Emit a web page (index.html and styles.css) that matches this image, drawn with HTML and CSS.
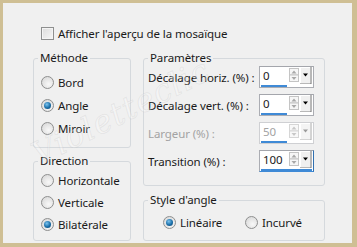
FILE: index.html
```html
<!doctype html>
<html>
	<head>
		<meta charset="utf-8"/>
		<link rel="stylesheet" href="styles.css">
	</head>
	<body>
		<div class="frame">
			<div class="check-row"><span class="checkbox"></span>Afficher l'aperçu de la mosaïque</div>

			<div class="cols">
				<div class="col col-left">
					<fieldset class="group methode">
						<legend>Méthode</legend>
						<div class="radio-row"><span class="radio"></span>Bord</div>
						<div class="radio-row"><span class="radio checked"></span>Angle</div>
						<div class="radio-row"><span class="radio"></span>Miroir</div>
					</fieldset>
					<fieldset class="group direction">
						<legend>Direction</legend>
						<div class="radio-row"><span class="radio"></span>Horizontale</div>
						<div class="radio-row"><span class="radio"></span>Verticale</div>
						<div class="radio-row"><span class="radio checked"></span>Bilatérale</div>
					</fieldset>
				</div>

				<div class="col col-right">
					<fieldset class="group params">
						<legend>Paramètres</legend>
						<div class="field">
							<span class="field-label">Décalage horiz. (%) :</span>
							<div class="spin">
								<div class="spin-top"><span class="spin-val">0</span>
									<svg class="spin-btns" width="24" height="17" viewBox="0 0 24 17"><rect x="1.5" y="1.5" width="9" height="6.5" fill="#f6f6f6" stroke="#c4c4c4"/><rect x="1.5" y="8" width="9" height="6.5" fill="#f6f6f6" stroke="#c4c4c4"/><path d="M3.5 6.5 L6 3.5 L8.5 6.5 Z M3.5 10 L6 13 L8.5 10 Z" fill="#a8a8a8"/><rect x="12.5" y="0.5" width="10" height="16" fill="#f0f0f0" stroke="#ffffff"/><path d="M23 0 V17 H12" fill="none" stroke="#707070"/><path d="M15 6.5 H20 L17.5 9.5 Z" fill="#000"/></svg>
								</div>
								<div class="spin-bar"></div>
							</div>
						</div>
						<div class="field">
							<span class="field-label">Décalage vert. (%) :</span>
							<div class="spin">
								<div class="spin-top"><span class="spin-val">0</span>
									<svg class="spin-btns" width="24" height="17" viewBox="0 0 24 17"><rect x="1.5" y="1.5" width="9" height="6.5" fill="#f6f6f6" stroke="#c4c4c4"/><rect x="1.5" y="8" width="9" height="6.5" fill="#f6f6f6" stroke="#c4c4c4"/><path d="M3.5 6.5 L6 3.5 L8.5 6.5 Z M3.5 10 L6 13 L8.5 10 Z" fill="#a8a8a8"/><rect x="12.5" y="0.5" width="10" height="16" fill="#f0f0f0" stroke="#ffffff"/><path d="M23 0 V17 H12" fill="none" stroke="#707070"/><path d="M15 6.5 H20 L17.5 9.5 Z" fill="#000"/></svg>
								</div>
								<div class="spin-bar"></div>
							</div>
						</div>
						<div class="field disabled">
							<span class="field-label">Largeur (%) :</span>
							<div class="spin">
								<div class="spin-top"><span class="spin-val">50</span>
									<svg class="spin-btns" width="24" height="17" viewBox="0 0 24 17"><rect x="1.5" y="1.5" width="9" height="6.5" fill="#f8f8f8" stroke="#d6d6d6"/><rect x="1.5" y="8" width="9" height="6.5" fill="#f8f8f8" stroke="#d6d6d6"/><path d="M3.5 6.5 L6 3.5 L8.5 6.5 Z M3.5 10 L6 13 L8.5 10 Z" fill="#c8c8c8"/><rect x="12.5" y="0.5" width="10" height="16" fill="#f4f4f4" stroke="#ffffff"/><path d="M23 0 V17 H12" fill="none" stroke="#a8a8a8"/><path d="M15 6.5 H20 L17.5 9.5 Z" fill="#9a9a9a"/></svg>
								</div>
								<div class="spin-bar"></div>
							</div>
						</div>
						<div class="field">
							<span class="field-label">Transition (%) :</span>
							<div class="spin active">
								<div class="spin-top"><span class="spin-val">100</span>
									<svg class="spin-btns" width="24" height="17" viewBox="0 0 24 17"><rect x="1.5" y="1.5" width="9" height="6.5" fill="#f6f6f6" stroke="#c4c4c4"/><rect x="1.5" y="8" width="9" height="6.5" fill="#f6f6f6" stroke="#c4c4c4"/><path d="M3.5 6.5 L6 3.5 L8.5 6.5 Z M3.5 10 L6 13 L8.5 10 Z" fill="#a8a8a8"/><rect x="12.5" y="0.5" width="10" height="16" fill="#f0f0f0" stroke="#ffffff"/><path d="M23 0 V17 H12" fill="none" stroke="#707070"/><path d="M15 6.5 H20 L17.5 9.5 Z" fill="#000"/></svg>
								</div>
								<div class="spin-bar"></div>
							</div>
						</div>
					</fieldset>
					<fieldset class="group style">
						<legend>Style d'angle</legend>
						<div class="inline-radios">
							<div class="radio-row opt"><span class="radio checked"></span>Linéaire</div>
							<div class="radio-row"><span class="radio"></span>Incurvé</div>
						</div>
					</fieldset>
				</div>
			</div>

			<span class="watermark">Violetteclic</span>
		</div>
	</body>
</html>
```
FILE: styles.css
```css
html, body {
	margin: 0;
	padding: 0;
}

body {
	background: #cfbf94;
	font-family: "Noto Sans", "Open Sans", sans-serif;
	font-size: 11.5px;
	letter-spacing: -0.1px;
	color: #1a1a1a;
}

.frame {
	position: relative;
	box-sizing: border-box;
	width: 357px;
	height: 247px;
	border-style: solid;
	border-color: #cfbf94;
	border-width: 3px 5px 4px 3px;
	background: #f0f0f0;
	padding: 24px 0 0 30px;
	overflow: hidden;
}

.check-row {
	display: flex;
	align-items: center;
	gap: 4px;
	height: 13px;
	margin-left: 8px;
}

.checkbox {
	box-sizing: border-box;
	width: 13px;
	height: 13px;
	border: 1px solid #8e8f8f;
	background: linear-gradient(135deg, #dcdcdc, #f6f6f6);
	box-shadow: inset 0 0 0 1px #f4f4f4;
}

.cols {
	display: flex;
	gap: 12px;
	margin-top: 10px;
}

.col {
	display: flex;
	flex-direction: column;
}

.col-left {
	width: 98px;
	gap: 5px;
}

.col-right {
	width: 182px;
	gap: 6px;
}

.group {
	box-sizing: border-box;
	margin: 0;
	padding: 0;
	min-width: 0;
	border: 1px solid #d5d9dd;
	border-radius: 3px;
}

.group legend {
	margin-left: 4px;
	padding: 0 2px;
	line-height: 16px;
}

.methode {
	height: 98px;
	padding-top: 5px;
}

.direction {
	height: 88px;
}

.params {
	height: 136px;
}

.style {
	height: 49px;
	padding-top: 6px;
}

.radio-row {
	display: flex;
	align-items: center;
	gap: 4px;
	height: 23px;
	margin-left: 7px;
}

.direction .radio-row {
	height: 22px;
}

.radio {
	position: relative;
	box-sizing: border-box;
	width: 13px;
	height: 13px;
	border-radius: 50%;
	border: 1px solid #8e8f8f;
	background: radial-gradient(circle at 60% 65%, #f8f8f8, #d4d4d4);
}

.radio.checked::after {
	content: "";
	position: absolute;
	left: 2px;
	top: 2px;
	width: 7px;
	height: 7px;
	border-radius: 50%;
	background: radial-gradient(circle at 40% 35%, #7cc4ef, #1a6ea8 55%, #0c3f68);
}

.field {
	display: flex;
	align-items: center;
	height: 22px;
	margin: 0 0 6px 4px;
}

.field-label {
	width: 111px;
	white-space: nowrap;
}

.spin {
	box-sizing: border-box;
	display: flex;
	flex-direction: column;
	width: 55px;
	height: 22px;
	border: 1px solid #abadb3;
	border-top-color: #a4a6ac;
	background: #fff;
}

.spin-top {
	display: flex;
	align-items: center;
	height: 17px;
}

.spin-val {
	flex: 1;
	padding-left: 3px;
	line-height: 17px;
}

.spin-btns {
	display: block;
	margin-right: 1px;
}

.spin-bar {
	width: 26px;
	height: 2px;
	margin: 1px 0 0 1px;
	background: #3f8ad6;
}

.spin.active {
	border-bottom-color: #3f8ad6;
	border-right-color: #3070b0;
}

.spin.active .spin-bar {
	width: auto;
	margin-right: 1px;
}

.disabled .field-label,
.disabled .spin-val {
	color: #a3a3a3;
}

.disabled .spin {
	border-color: #cfd0d3;
}

.inline-radios {
	display: flex;
	height: 16px;
	margin-left: 12px;
}

.inline-radios .radio-row {
	height: 16px;
}

.inline-radios .opt {
	width: 75px;
}

.watermark {
	position: absolute;
	left: 40px;
	top: 132px;
	font-family: "DejaVu Serif", serif;
	font-style: italic;
	font-size: 32px;
	letter-spacing: 1px;
	color: rgba(255, 255, 255, 0.3);
	-webkit-text-stroke: 1px rgba(150, 150, 150, 0.14);
	transform: rotate(-27deg);
	transform-origin: left bottom;
	pointer-events: none;
}
```
